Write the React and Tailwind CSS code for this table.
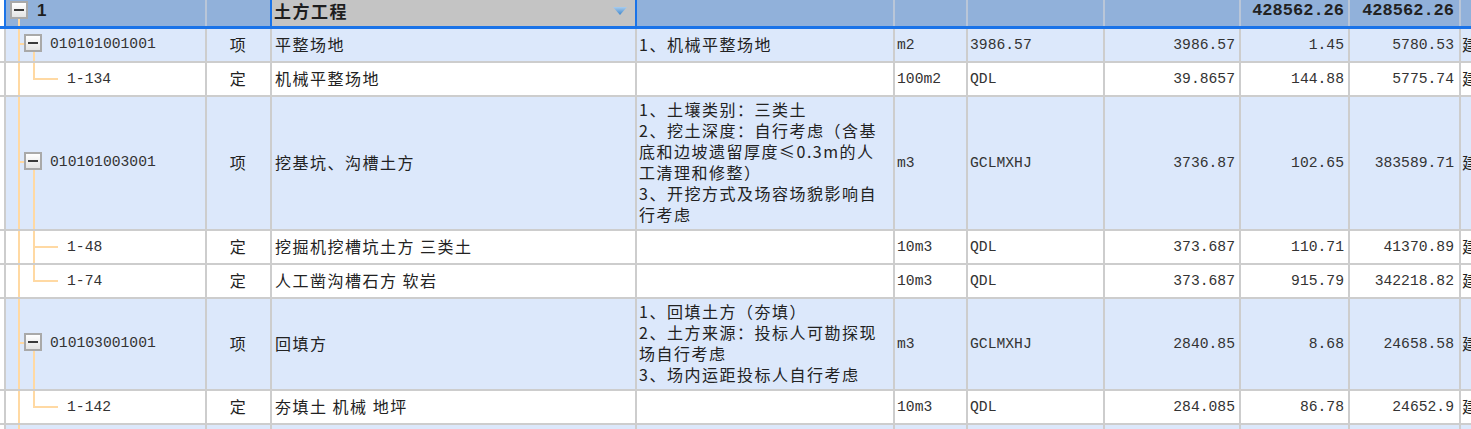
import React from 'react';

const CJK = "font-['Noto_Sans_CJK_SC',sans-serif] text-[16px] tracking-[1.5px]";
const MONO = "font-['Liberation_Mono',monospace] text-[14.7px]";
const LINE = 'bg-[#ffd9a3]';

const rows = [
    { kind: 'item', code: '010101001001', type: '项', name: '平整场地', desc: ['1、机械平整场地'], unit: 'm2', expr: '3986.57', qty: '3986.57', price: '1.45', total: '5780.53', h: 'h-[34px]' },
    { kind: 'sub', last: true, code: '1-134', type: '定', name: '机械平整场地', desc: [], unit: '100m2', expr: 'QDL', qty: '39.8657', price: '144.88', total: '5775.74', h: 'h-[34px]' },
    {
        kind: 'item', code: '010101003001', type: '项', name: '挖基坑、沟槽土方',
        desc: ['1、土壤类别：三类土', '2、挖土深度：自行考虑（含基', '底和边坡遗留厚度≤0.3m的人', '工清理和修整）', '3、开挖方式及场容场貌影响自', '行考虑'],
        unit: 'm3', expr: 'GCLMXHJ', qty: '3736.87', price: '102.65', total: '383589.71', h: 'h-[134px]'
    },
    { kind: 'sub', last: false, code: '1-48', type: '定', name: '挖掘机挖槽坑土方 三类土', desc: [], unit: '10m3', expr: 'QDL', qty: '373.687', price: '110.71', total: '41370.89', h: 'h-[34px]' },
    { kind: 'sub', last: true, code: '1-74', type: '定', name: '人工凿沟槽石方 软岩', desc: [], unit: '10m3', expr: 'QDL', qty: '373.687', price: '915.79', total: '342218.82', h: 'h-[34px]' },
    {
        kind: 'item', code: '010103001001', type: '项', name: '回填方',
        desc: ['1、回填土方（夯填）', '2、土方来源：投标人可勘探现', '场自行考虑', '3、场内运距投标人自行考虑'],
        unit: 'm3', expr: 'GCLMXHJ', qty: '2840.85', price: '8.68', total: '24658.58', h: 'h-[92px]'
    },
    { kind: 'sub', last: true, code: '1-142', type: '定', name: '夯填土 机械 地坪', desc: [], unit: '10m3', expr: 'QDL', qty: '284.085', price: '86.78', total: '24652.9', h: 'h-[34px]' },
];

const MinusBox = ({ className }) => (
    <span className={`absolute flex h-[18px] w-[18px] items-center justify-center border-2 border-[#a9a9a9] bg-gradient-to-b from-white to-[#e4e4e4] ${className}`}>
        <span className="h-[2px] w-[10px] bg-[#3a3a3a]" />
    </span>
);

const Cell = ({ w, className = '', children }) => (
    <div className={`${w} flex h-full shrink-0 items-center border-r-2 border-[#cdcdcd] ${className}`}>{children}</div>
);

const TreeCell = ({ row }) => (
    <div className="relative flex h-full w-[201px] shrink-0 items-center border-r-2 border-[#cdcdcd]">
        <span className={`absolute left-[12px] top-0 bottom-0 w-[2px] ${LINE}`} />
        {row.kind === 'item' ? (
            <>
                <span className={`absolute left-[12px] top-1/2 h-[2px] w-[8px] -translate-y-[2px] ${LINE}`} />
                <MinusBox className="left-[18px] top-1/2 -translate-y-[11px]" />
                <span className={`absolute left-[27px] top-[calc(50%+7px)] bottom-0 w-[2px] ${LINE}`} />
                <span className={`${MONO} pb-[1px] pl-[44px] text-[#333]`}>{row.code}</span>
            </>
        ) : (
            <>
                <span className={`absolute left-[27px] top-0 w-[2px] ${row.last ? 'h-1/2' : 'bottom-0'} ${LINE}`} />
                <span className={`absolute left-[27px] top-1/2 h-[2px] w-[25px] -translate-y-[1px] ${LINE}`} />
                <span className={`${MONO} pl-[61px] text-[#333]`}>{row.code}</span>
            </>
        )}
    </div>
);

const DataRow = ({ row }) => {
    const bg = row.kind === 'item' ? 'bg-[#dce8fb]' : 'bg-white';
    return (
        <div className={`flex ${row.h} border-b-2 border-[#cdcdcd] ${bg}`}>
            <div className="h-full w-[6px] shrink-0 border-r-2 border-[#cdcdcd] bg-white" />
            <TreeCell row={row} />
            <Cell w="w-[65px]" className={`justify-center pb-[3px] ${CJK} text-[#222]`}>{row.type}</Cell>
            <Cell w="w-[365px]" className={`pb-[3px] pl-[3px] ${CJK} text-[#222]`}>{row.name}</Cell>
            <Cell w="w-[258px]" className={`pb-[2px] pl-[2px] ${CJK} text-[#222]`}>
                <div className="flex flex-col">
                    {row.desc.map((line, i) => (
                        <div key={i} className="whitespace-nowrap leading-[21px]">{line}</div>
                    ))}
                </div>
            </Cell>
            <Cell w="w-[73px]" className={`pl-[2px] ${MONO} text-[#333]`}>{row.unit}</Cell>
            <Cell w="w-[137px]" className={`pl-[2px] ${MONO} text-[#333]`}>{row.expr}</Cell>
            <Cell w="w-[136px]" className={`justify-end pr-[4px] ${MONO} text-[#333]`}>{row.qty}</Cell>
            <Cell w="w-[109px]" className={`justify-end pr-[4px] ${MONO} text-[#333]`}>{row.price}</Cell>
            <Cell w="w-[111px]" className={`justify-end pr-[5px] ${MONO} text-[#333]`}>{row.total}</Cell>
            <div className={`flex h-full flex-1 items-center pb-[3px] pl-[1px] ${CJK} whitespace-nowrap text-[#222]`}>建设工程</div>
        </div>
    );
};

const HeaderRow = () => (
    <div className="flex h-[29px] border-b-[3px] border-[#1a73e8] bg-[#91b1da]">
        <div className="h-full w-[6px] shrink-0 border-r-2 border-[#1a73e8] bg-white" />
        <div className="relative flex h-full w-[201px] shrink-0 items-center border-r-2 border-[#b9c6d8]">
            <MinusBox className="left-[4px] top-[1px]" />
            <span className={`absolute left-[12px] top-[19px] bottom-0 w-[2px] ${LINE}`} />
            <span className="pb-[4px] pl-[31px] font-['Liberation_Sans',sans-serif] text-[17px] font-bold text-[#1e1e1e]">1</span>
        </div>
        <div className="h-full w-[65px] shrink-0 border-r-2 border-[#1a73e8]" />
        <div className="relative flex h-full w-[365px] shrink-0 items-center border-r-2 border-[#1a73e8] bg-[#c4c4c4]">
            <span className="pb-[5px] pl-[2px] font-['Noto_Sans_CJK_SC',sans-serif] text-[17px] leading-[22px] font-bold tracking-[1.5px] text-[#1e1e1e]">土方工程</span>
            <svg className="absolute right-[7px] top-[6px]" width="16" height="10" viewBox="0 0 16 10">
                <defs>
                    <linearGradient id="tri" x1="0" y1="0" x2="0" y2="1">
                        <stop offset="0" stopColor="#a9cdee" />
                        <stop offset="1" stopColor="#3f86cc" />
                    </linearGradient>
                </defs>
                <polygon points="1,1 15,1 8,9" fill="url(#tri)" />
            </svg>
        </div>
        <div className="h-full w-[258px] shrink-0 border-r-2 border-[#b9c6d8]" />
        <div className="h-full w-[73px] shrink-0 border-r-2 border-[#b9c6d8]" />
        <div className="h-full w-[137px] shrink-0 border-r-2 border-[#b9c6d8]" />
        <div className="h-full w-[136px] shrink-0 border-r-2 border-[#b9c6d8]" />
        <div className="flex h-full w-[109px] shrink-0 items-center justify-end border-r-2 border-[#b9c6d8] pb-[4px] pr-[4px] font-['Liberation_Mono',monospace] text-[17px] font-bold text-[#222]">428562.26</div>
        <div className="flex h-full w-[111px] shrink-0 items-center justify-end border-r-2 border-[#b9c6d8] pb-[4px] pr-[5px] font-['Liberation_Mono',monospace] text-[17px] font-bold text-[#222]">428562.26</div>
        <div className="h-full flex-1" />
    </div>
);

const App = () => (
    <div className="h-[429px] w-[1471px] overflow-hidden bg-white">
        <HeaderRow />
        {rows.map((row, i) => (
            <DataRow key={i} row={row} />
        ))}
        <div className="flex h-[40px] bg-[#dce8fb]">
            <div className="h-full w-[6px] shrink-0 border-r-2 border-[#cdcdcd] bg-white" />
            <div className="relative h-full w-[201px] shrink-0 border-r-2 border-[#cdcdcd]">
                <span className={`absolute left-[12px] top-0 bottom-0 w-[2px] ${LINE}`} />
            </div>
            <div className="h-full w-[65px] shrink-0 border-r-2 border-[#cdcdcd]" />
            <div className="h-full w-[365px] shrink-0 border-r-2 border-[#cdcdcd]" />
            <div className="h-full w-[258px] shrink-0 border-r-2 border-[#cdcdcd]" />
            <div className="h-full w-[73px] shrink-0 border-r-2 border-[#cdcdcd]" />
            <div className="h-full w-[137px] shrink-0 border-r-2 border-[#cdcdcd]" />
            <div className="h-full w-[136px] shrink-0 border-r-2 border-[#cdcdcd]" />
            <div className="h-full w-[109px] shrink-0 border-r-2 border-[#cdcdcd]" />
            <div className="h-full w-[111px] shrink-0 border-r-2 border-[#cdcdcd]" />
        </div>
    </div>
);

export default App;
